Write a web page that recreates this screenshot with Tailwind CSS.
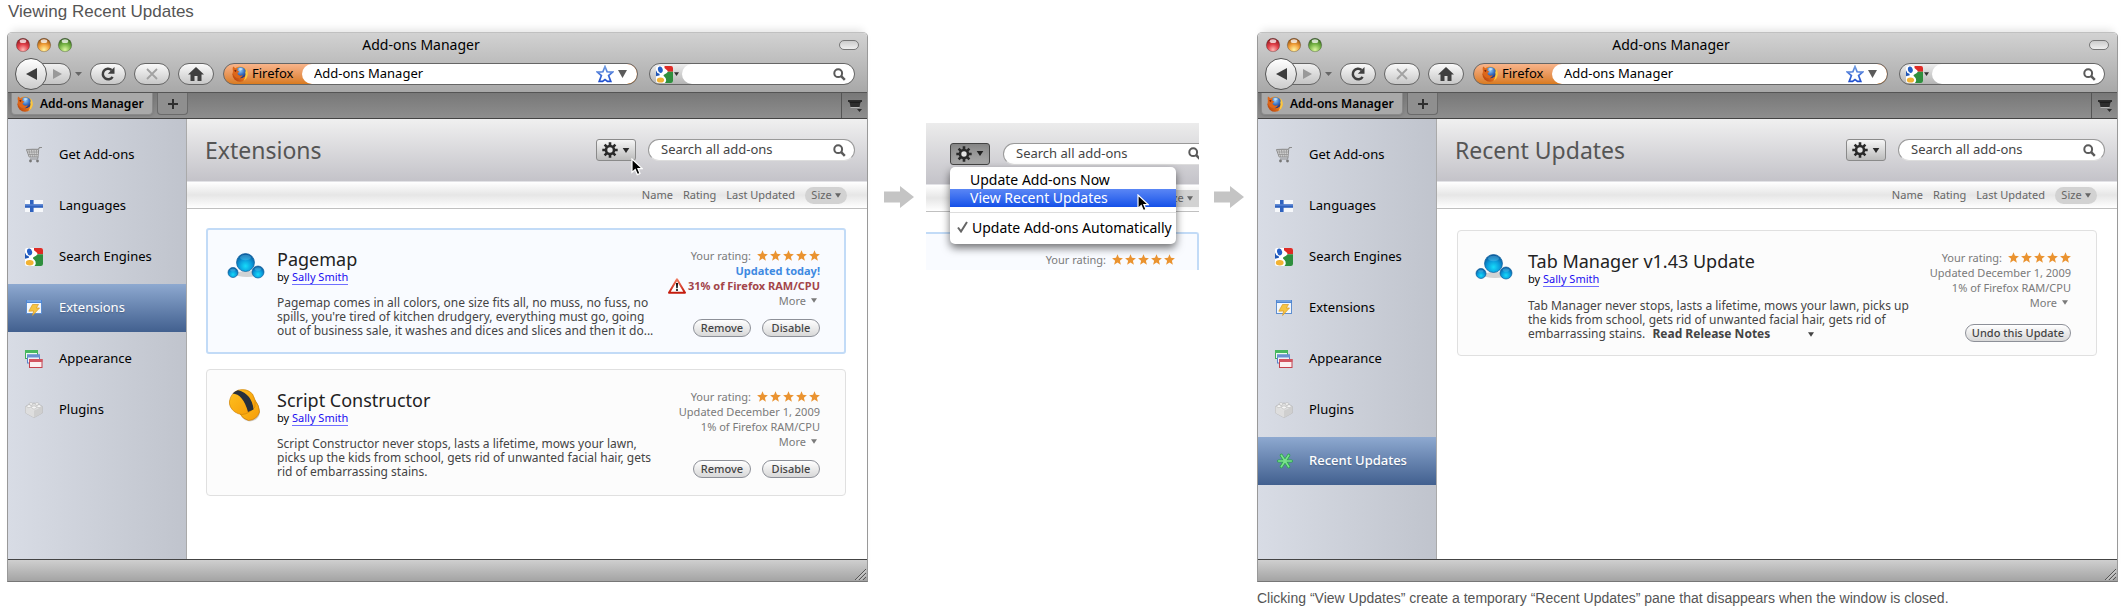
<!DOCTYPE html>
<html lang="en">
<head>
<meta charset="utf-8">
<title>Viewing Recent Updates</title>
<script src="https://cdn.jsdelivr.net/npm/@tailwindcss/browser@4"></script>
</head>
<body class="bg-white font-['Noto_Sans',sans-serif] text-black">

<!-- Shared icon symbols -->
<svg width="0" height="0" class="absolute" aria-hidden="true">
  <defs>
    <radialGradient id="gRed" cx=".5" cy=".85" r=".8"><stop offset="0" stop-color="#ffb9b4"/><stop offset=".5" stop-color="#e2414a"/><stop offset="1" stop-color="#8c1a1e"/></radialGradient>
    <radialGradient id="gYellow" cx=".5" cy=".85" r=".8"><stop offset="0" stop-color="#fff3a0"/><stop offset=".5" stop-color="#f3a23c"/><stop offset="1" stop-color="#96500f"/></radialGradient>
    <radialGradient id="gGreen" cx=".5" cy=".85" r=".8"><stop offset="0" stop-color="#dcf7a0"/><stop offset=".5" stop-color="#7cb94a"/><stop offset="1" stop-color="#33641c"/></radialGradient>
    <radialGradient id="gBall" cx=".5" cy=".7" r=".7"><stop offset="0" stop-color="#16dcfa"/><stop offset=".5" stop-color="#0b9cdc"/><stop offset="1" stop-color="#0a4f94"/></radialGradient>
    <linearGradient id="gHat" x1="0" y1="0" x2="1" y2="1"><stop offset="0" stop-color="#ffc21f"/><stop offset="1" stop-color="#f59a08"/></linearGradient>
    <linearGradient id="gWarn" x1="0" y1="0" x2="0" y2="1"><stop offset="0" stop-color="#f07a60"/><stop offset="1" stop-color="#c41a0c"/></linearGradient>
    <linearGradient id="gStar" x1="0" y1="0" x2="0" y2="1"><stop offset="0" stop-color="#6f9be0"/><stop offset="1" stop-color="#1f4fcf"/></linearGradient>
    <radialGradient id="gGlobe" cx=".45" cy=".3" r=".7"><stop offset="0" stop-color="#9fd4f7"/><stop offset=".5" stop-color="#3f78c8"/><stop offset="1" stop-color="#1c2f78"/></radialGradient>
    <linearGradient id="gFox" x1="1" y1="0" x2="0" y2="1"><stop offset="0" stop-color="#fbc23a"/><stop offset=".45" stop-color="#ee7d1b"/><stop offset="1" stop-color="#a8340c"/></linearGradient>
  </defs>
  <symbol id="firefox" viewBox="0 0 16 16">
    <circle cx="8" cy="8.200" r="7.600" fill="url(#gFox)"/>
    <circle cx="8.700" cy="6.600" r="5.600" fill="url(#gGlobe)"/>
    <path d="M6.500 2.600Q9 1.200 11 3 9.500 4.600 7.600 4z" fill="#cfe9f9" opacity=".8"/>
    <path d="M1 .6Q2.400 1.300 3.200 2.600 4.600 2.200 5.800 3 5.200 4 5.700 4.900 7 5 7.400 5.600 6.400 6.900 5.500 7.400 5.800 9 7.600 9.600 9.700 9.900 10.600 8.800 10.700 10.900 8.600 11.700 5 12.800 2.600 10.500.4 8 .9 4.600.4 2.600 1 .6z" fill="#dd671a"/>
    <path d="M2.200 4.200Q3.600 3.700 4.600 4.700L3.200 6z" fill="#6d1d09"/>
    <path d="M13.600 2.200Q16.200 5.200 15.700 8.800 15 13 11.500 14.900 14.200 10.500 13.200 6.500 14 4.500 13.600 2.200z" fill="#fbc944"/>
  </symbol>
  <symbol id="google" viewBox="0 0 18 18">
    <rect width="18" height="18" rx="2" fill="#fff"/>
    <path d="M9 0h7q2 0 2 2v4.200h-5.400l-.6-1.400L9 2.200z" fill="#de2b26"/>
    <path d="M12.600 6.200H18V16q0 2-2 2h-6.500q2-2 1-4.400-.8-1.800-2.300-2.900-.6-.7.200-1.400Q11.600 7.600 12.600 6.200z" fill="#2f8f3e"/>
    <path d="M0 4.500q.7 3.200 3.600 3.600L4 9.800 0 10.800z" fill="#1e55b5"/>
    <ellipse cx="4.600" cy="3.900" rx="2.500" ry="3.500" transform="rotate(-14 4.600 3.900)" fill="#2460c8"/>
    <ellipse cx="4.700" cy="14.800" rx="3.900" ry="2.700" fill="#f2b232"/>
  </symbol>
  <symbol id="cart" viewBox="0 0 16 16">
    <path d="M.5 2.500 12.500 2 13.200 1q.3-.6 1.100-.6H16" fill="none" stroke="#8e8e8e" stroke-width="1.200"/>
    <path d="M.5 2.700h12.200L12 10H3.200z" fill="#dcdcdc" stroke="#8e8e8e"/>
    <path d="M3 3l1.600 7M5.500 3l1 7M8 3l.3 7M10.500 3 10 10M1.300 5h11M2 7.500h10" stroke="#929292" stroke-width=".8"/>
    <path d="M12 10q.4 2-1 2H4" fill="none" stroke="#8e8e8e"/>
    <circle cx="4.500" cy="14" r="1.400" fill="#777"/><circle cx="11.500" cy="14" r="1.400" fill="#777"/>
  </symbol>
  <symbol id="flag" viewBox="0 0 18 12">
    <rect width="18" height="12" fill="#f6f8fb"/><path d="M0 4.200h18v3.600H0z" fill="#2f62bf"/><path d="M5 0h3.600v12H5z" fill="#2f62bf"/><path d="M0 5h18" stroke="#7ba0de" stroke-width=".8"/>
  </symbol>
  <symbol id="extension" viewBox="0 0 16 16">
    <rect x=".5" y=".5" width="15" height="13" fill="#f3f7fc" stroke="#5f8fd0"/><path d="M0 0h16v3H0z" fill="#4f86d2"/><path d="M1 1h14" stroke="#9cc0ee"/>
    <path d="M6.500 4.500h6L10.300 8h3.200L6.600 15.500 7.600 11 2.800 11.200z" fill="#f6c544" stroke="#d79a25" stroke-width=".7"/>
  </symbol>
  <symbol id="appearance" viewBox="0 0 18 18">
    <rect x=".5" y=".5" width="12" height="8" fill="#effaf0" stroke="#3fae58"/><path d="M0 0h13v3H0z" fill="#48b860"/>
    <rect x="2.500" y="5" width="12" height="8" fill="#eef3fb" stroke="#5b82c8"/><path d="M2 4.500h13v3H2z" fill="#6a90d2"/>
    <rect x="4.500" y="9.500" width="12.500" height="8" fill="#fbf0f0" stroke="#c4414c"/><path d="M4 9h13.500v3H4z" fill="#d25560"/>
  </symbol>
  <symbol id="plugin" viewBox="0 0 18 16">
    <path d="M.6 4.500 9 1l8.400 3.500V11L9 15.500.6 11z" fill="#e6e6e6" stroke="#b4b4b4" stroke-width=".8"/>
    <path d="M9 8.500 17.400 4.500V11L9 15.500z" fill="#cfcfcf"/><path d="M.6 4.500 9 8.500v7L.6 11z" fill="#dedede"/>
    <g fill="#f6f6f6" stroke="#b2b2b2" stroke-width=".6"><ellipse cx="6" cy="2" rx="2" ry="1.300"/><ellipse cx="12" cy="2" rx="2" ry="1.300"/><ellipse cx="4" cy="4.200" rx="2.200" ry="1.500"/><ellipse cx="9" cy="5.500" rx="2.400" ry="1.600"/><ellipse cx="14" cy="4.200" rx="2.200" ry="1.500"/></g>
  </symbol>
  <symbol id="asterisk" viewBox="0 0 16 16">
    <path d="M1.700 8h12.600M4.300 2.300 11.700 13.700M11.700 2.300 4.300 13.700" stroke="#2aa84a" stroke-width="3.200" stroke-linecap="round"/><path d="M1.700 8h12.600M4.300 2.300 11.700 13.700M11.700 2.300 4.300 13.700" stroke="#7be08e" stroke-width="1.600" stroke-linecap="round"/>
  </symbol>
  <symbol id="gear" viewBox="0 0 16 16">
    <path d="M8 .3v15.400M.3 8h15.400M2.600 2.600l10.800 10.800M13.400 2.600 2.600 13.400" stroke="#2a2a2a" stroke-width="2.600"/><circle cx="8" cy="8" r="4" fill="#e4e4e4" stroke="#2a2a2a" stroke-width="2.600"/>
  </symbol>
  <symbol id="search" viewBox="0 0 13 13">
    <circle cx="5.200" cy="5.200" r="3.900" fill="none" stroke="#5a5a5a" stroke-width="2"/><path d="M8.200 8.200 11.800 11.800" stroke="#5a5a5a" stroke-width="2.500"/>
  </symbol>
  <symbol id="star" viewBox="0 0 12 12"><path d="M6 .2 7.600 4.200 11.900 4.500 8.600 7.300 9.700 11.600 6 9.300 2.300 11.600 3.400 7.300.1 4.500 4.400 4.200z" fill="#ea9330"/></symbol>
  <symbol id="bookmark" viewBox="0 0 18 18"><path d="M9 1.500 11.100 6.800 16.700 7.100 12.600 10.600 14.800 16.400H11.500L9 14.600 6.500 16.400H3.200L5.400 10.600 1.300 7.100 6.900 6.800z" fill="#fff" stroke="url(#gStar)" stroke-width="1.700"/></symbol>
  <symbol id="balls" viewBox="0 0 38 28">
    <ellipse cx="20" cy="22" rx="12" ry="3" fill="#aaa" opacity=".5"/>
    <circle cx="6" cy="20.500" r="5" fill="url(#gBall)" stroke="#0a5f9c" stroke-width=".7"/><circle cx="31" cy="20" r="6" fill="url(#gBall)" stroke="#0a5f9c" stroke-width=".7"/>
    <circle cx="18.500" cy="10.500" r="9" fill="url(#gBall)" stroke="#0a5f9c" stroke-width=".7"/>
    <ellipse cx="18.500" cy="5.500" rx="5.500" ry="2.800" fill="#7fd6f6" opacity=".3"/><ellipse cx="5.800" cy="18" rx="2.800" ry="1.500" fill="#7fd6f6" opacity=".3"/><ellipse cx="31" cy="17" rx="3.400" ry="1.800" fill="#7fd6f6" opacity=".3"/>
  </symbol>
  <symbol id="hardhat" viewBox="0 0 34 34">
    <path d="M13 27Q24 24 27 11q5 6 5 13-2 8-10 8.500-6-.5-9-5.500z" fill="#888" opacity=".35"/>
    <path d="M12 25Q23 22 26.500 10.500q5 6 5 12.500Q29 31 20.500 31.500 15 30 12 25z" fill="url(#gHat)" stroke="#c97a06" stroke-width=".7"/>
    <path d="M1.500 12Q3 4 10 1.200 19-1 24.500 5q4 6 2.500 13Q21 25 14 25.500 6 24.500 2.500 18 1 15 1.500 12z" fill="url(#gHat)" stroke="#d08408" stroke-width=".7"/>
    <path d="M4.500 4.500Q15 5 20 23L25.500 20.500Q24 5 10 1.300 7 2 4.500 4.500z" fill="#27303c"/>
  </symbol>
  <symbol id="warning" viewBox="0 0 18 16"><path d="M9 1.300 17 14.700H1z" fill="#fff" stroke="url(#gWarn)" stroke-width="2" stroke-linejoin="round"/><path d="M7.900 5h2.200L9.700 10.300H8.300z" fill="#111"/><circle cx="9" cy="12" r="1.100" fill="#111"/></symbol>
  <symbol id="caret" viewBox="0 0 8 6"><path d="M0 0h8L4 6z" fill="currentColor"/></symbol>
  <symbol id="reload" viewBox="0 0 16 16"><path d="M12.600 10.800A5.300 5.300 0 1 1 11.600 4" fill="none" stroke="#3f3f3f" stroke-width="2.500"/><path d="M14.500 1v6.700H7.800z" fill="#3f3f3f"/></symbol>
  <symbol id="stop" viewBox="0 0 12 12"><path d="M1 1l10 10M11 1 1 11" stroke="#a2a2a2" stroke-width="1.800"/></symbol>
  <symbol id="home" viewBox="0 0 16 14"><path d="M8 0 16 7.500H13.500V14H9.500V9h-3v5h-4V7.500H0z" fill="#3f3f3f"/></symbol>
  <symbol id="tablist" viewBox="0 0 14 12"><path d="M0 0h14v2h-1.500L11.500 7h-9L1.500 2H0z" fill="#2d2d2d"/><path d="M1.500 2.300h11" stroke="#111" stroke-width=".7"/><path d="M9 9h5l-2.500 3z" fill="#2d2d2d"/><path d="M2.500 7.500h9" stroke="#c4c4c4" stroke-width=".8"/></symbol>
  <symbol id="cursor" viewBox="0 0 12 18"><path d="M1 1v13.500l3.200-2.900 2.100 5 2.700-1.100-2.100-4.900h4.300z" fill="#000" stroke="#fff" stroke-width="1.200"/></symbol>
  <symbol id="check" viewBox="0 0 11 12"><path d="M1 6.500 4 10.500 10 1" fill="none" stroke="#666" stroke-width="2"/></symbol>
  <symbol id="flow" viewBox="0 0 30 22"><path d="M0 5.500h16V0L30 11 16 22v-5.500H0z" fill="#c4c4c4"/></symbol>
  <symbol id="grip" viewBox="0 0 12 12"><path d="M1 12 12 1M5 12 12 5M9 12 12 9" stroke="#555"/><path d="M2 12.500 12.500 2M6 12.500 12.500 6" stroke="#e5e5e5" stroke-width=".7"/></symbol>
  <symbol id="lights" viewBox="0 0 58 16">
    <g stroke="#00000055" stroke-width=".7"><circle cx="8" cy="8" r="6.700" fill="url(#gRed)"/><circle cx="29" cy="8" r="6.700" fill="url(#gYellow)"/><circle cx="50" cy="8" r="6.700" fill="url(#gGreen)"/></g>
    <g fill="#fff" opacity=".75"><ellipse cx="8" cy="4.200" rx="3.300" ry="1.900"/><ellipse cx="29" cy="4.200" rx="3.300" ry="1.900"/><ellipse cx="50" cy="4.200" rx="3.300" ry="1.900"/></g>
  </symbol>
</svg>

<div class="pl-[7px] pr-1">
  <h1 class="h-8 pt-px pl-px font-['Liberation_Sans',Arial,sans-serif] text-[17px] leading-[22px] text-[#555]">Viewing Recent Updates</h1>

  <div class="grid grid-cols-[minmax(0,1fr)_389px_minmax(0,1fr)] items-start">

    <!-- Extensions window -->
    <section aria-label="Extensions window" class="rounded-t-[5px] border border-[#999] border-t-[#c0c0c0] border-b-[#777] bg-white shadow-[0_-7px_8px_-5px_rgba(0,0,0,0.12)]">
      <header class="rounded-t-[4px] border-b border-[#555] bg-linear-to-b from-[#d2d2d2] to-[#a8a8a8]">
        <div class="grid h-[23px] grid-cols-[1fr_auto_1fr] items-center pl-[7px] pr-2">
          <svg class="h-4 w-[58px]" role="img" aria-label="Window controls"><use href="#lights"/></svg>
          <span class="pr-8 text-[14px] leading-5">Add-ons Manager</span>
          <button type="button" aria-label="Toggle toolbar" class="h-[10px] w-5 justify-self-end rounded-full border border-[#777] bg-linear-to-b from-[#ccc] to-[#f0f0f0]"></button>
        </div>
        <div class="flex h-9 items-center pl-[7px] pr-3">
          <button type="button" aria-label="Back" class="z-10 flex size-8 shrink-0 items-center justify-center rounded-full border border-[#555] bg-linear-to-b from-white to-[#ccc]"><svg class="h-3 w-[11px]" viewBox="0 0 11 12"><path d="M11 0v12L0 6z" fill="#3c3c3c"/></svg></button>
          <button type="button" aria-label="Forward" class="-ml-2 flex h-[22px] w-8 shrink-0 items-center justify-end rounded-r-full border border-[#666] bg-linear-to-b from-[#f0f0f0] to-[#c4c4c4] pr-2"><svg class="h-[10px] w-[9px]" viewBox="0 0 9 10"><path d="M0 0v10l9-5z" fill="#999"/></svg></button>
          <button type="button" aria-label="History" class="ml-1 text-[#666]"><svg class="h-1 w-[7px]" viewBox="0 0 8 6" preserveAspectRatio="none"><path d="M0 0h8L4 6z" fill="currentColor"/></svg></button>
          <div class="ml-2 flex gap-2">
            <button type="button" aria-label="Reload" class="flex h-[22px] w-9 items-center justify-center rounded-full border border-[#666] bg-linear-to-b from-[#fafafa] to-[#c8c8c8]"><svg class="size-4"><use href="#reload"/></svg></button>
            <button type="button" aria-label="Stop" class="flex h-[22px] w-9 items-center justify-center rounded-full border border-[#666] bg-linear-to-b from-[#fafafa] to-[#c8c8c8]"><svg class="size-3"><use href="#stop"/></svg></button>
            <button type="button" aria-label="Home" class="flex h-[22px] w-9 items-center justify-center rounded-full border border-[#666] bg-linear-to-b from-[#fafafa] to-[#c8c8c8]"><svg class="h-[14px] w-4"><use href="#home"/></svg></button>
          </div>
          <div class="ml-[9px] flex h-[22px] min-w-0 flex-1 items-center overflow-hidden rounded-full border border-[#666] bg-linear-to-b from-[#f8b48a] to-[#d97b1c]">
            <span class="flex w-[78px] shrink-0 items-center gap-1 pl-2 text-[13px]"><svg class="size-4"><use href="#firefox"/></svg>Firefox</span>
            <div class="flex h-5 min-w-0 flex-1 items-center gap-1 rounded-full bg-white pl-3 pr-[10px]">
              <input type="text" aria-label="Address" value="Add-ons Manager" class="min-w-0 flex-1 bg-transparent text-[13px] outline-none">
              <button type="button" aria-label="Bookmark"><svg class="size-[18px]"><use href="#bookmark"/></svg></button>
              <button type="button" aria-label="Address history" class="text-[#5a5a5a]"><svg class="h-2 w-[9px]" viewBox="0 0 9 8"><path d="M0 0h9L4.500 8z" fill="currentColor"/></svg></button>
            </div>
          </div>
          <div class="ml-[11px] flex h-[22px] w-[206px] shrink-0 items-center overflow-hidden rounded-full border border-[#666] bg-linear-to-b from-[#eee] to-[#b4b4b4]">
            <button type="button" aria-label="Search provider" class="flex w-8 shrink-0 items-center gap-px pl-[6px] text-[#333]"><svg class="size-[17px]"><use href="#google"/></svg><svg class="h-1 w-[5px]"><use href="#caret"/></svg></button>
            <div class="flex h-5 min-w-0 flex-1 items-center rounded-full bg-white pl-3 pr-2"><input type="search" aria-label="Web search" class="min-w-0 flex-1 bg-transparent text-[13px] outline-none"><svg class="size-[13px]"><use href="#search"/></svg></div>
          </div>
        </div>
      </header>
      <nav aria-label="Tabs" class="flex h-[26px] items-start gap-1 border-b border-[#444] bg-linear-to-b from-[#787878] to-[#8e8e8e] pl-[3px]">
        <button type="button" class="flex h-[22px] w-[142px] items-center gap-[7px] rounded-b-[4px] border border-t-0 border-[#8a8a8a] bg-[#a9a9a9] pl-[5px] text-[12px] font-semibold shadow"><svg class="size-4 shrink-0"><use href="#firefox"/></svg><span class="whitespace-nowrap">Add-ons Manager</span></button>
        <button type="button" aria-label="New tab" class="flex h-[22px] w-[31px] items-center justify-center rounded-b-[4px] border border-t-0 border-[#6a6a6a] bg-[#8f8f8f]"><svg class="size-[10px]" viewBox="0 0 10 10"><path d="M5 0v10M0 5h10" stroke="#2e2e2e" stroke-width="2"/></svg></button>
        <button type="button" aria-label="List all tabs" class="ml-auto flex h-[25px] w-[26px] items-center justify-center border-l border-[#555]"><svg class="h-3 w-[14px]"><use href="#tablist"/></svg></button>
      </nav>
      <div class="flex min-h-[440px]">
        <aside class="w-[179px] shrink-0 border-r border-[#aaa] bg-linear-to-r from-[#d8dce5] to-[#c0c4cd] pt-3 text-[13px]">
          <ul class="flex flex-col gap-[3px]">
            <li><a href="#" class="flex h-12 items-center pl-[17px]"><span class="flex w-[34px]"><svg class="ml-px size-4"><use href="#cart"/></svg></span>Get Add-ons</a></li>
            <li><a href="#" class="flex h-12 items-center pl-[17px]"><span class="flex w-[34px]"><svg class="h-3 w-[18px]"><use href="#flag"/></svg></span>Languages</a></li>
            <li><a href="#" class="flex h-12 items-center pl-[17px]"><span class="flex w-[34px]"><svg class="size-[18px]"><use href="#google"/></svg></span>Search Engines</a></li>
            <li><a href="#" aria-current="page" class="flex h-12 items-center bg-linear-to-b from-[#8ea9d0] to-[#42608f] pl-[17px] text-white text-shadow-sm"><span class="flex w-[34px]"><svg class="ml-px size-4"><use href="#extension"/></svg></span>Extensions</a></li>
            <li><a href="#" class="flex h-12 items-center pl-[17px]"><span class="flex w-[34px]"><svg class="size-[18px]"><use href="#appearance"/></svg></span>Appearance</a></li>
            <li><a href="#" class="flex h-12 items-center pl-[17px]"><span class="flex w-[34px]"><svg class="h-4 w-[18px]"><use href="#plugin"/></svg></span>Plugins</a></li>
          </ul>
        </aside>
        <main class="min-w-0 flex-1">
          <div class="flex h-[62px] items-center bg-linear-to-b from-[#f0f0f0] to-[#c4c3c9] pl-[18px] pr-3">
            <h2 class="flex-1 text-[23px] text-[#555]">Extensions</h2>
            <div class="relative mr-3">
              <button type="button" aria-label="Tools" class="flex h-[22px] w-10 items-center justify-center gap-1 rounded-[3px] border border-[#8a8a8a] bg-linear-to-b from-[#f6f6f6] to-[#bcbcbc] text-[#2a2a2a]"><svg class="size-4"><use href="#gear"/></svg><svg class="h-[5px] w-2"><use href="#caret"/></svg></button>
              <svg class="absolute top-[19px] left-[35px] h-[18px] w-3"><use href="#cursor"/></svg>
            </div>
            <label class="flex h-[22px] w-[207px] items-center rounded-full border border-[#999] border-b-[#ddd] bg-white pl-3 pr-2"><input type="search" aria-label="Search all add-ons" placeholder="Search all add-ons" class="min-w-0 flex-1 bg-transparent text-[13px] outline-none placeholder:text-[#444]"><svg class="size-[13px]"><use href="#search"/></svg></label>
          </div>
          <div class="flex h-[28px] items-center justify-end border-t border-b border-t-[#e2e2e6] border-b-[#c0c0c0] bg-linear-to-b from-white via-[#e6e6e6] to-white pr-5 text-[11px] text-[#666]">
            <button type="button" class="mr-[10px]">Name</button><button type="button" class="mr-[10px]">Rating</button><button type="button" class="mr-[10px]">Last Updated</button>
            <button type="button" class="flex h-[17px] w-[42px] items-center justify-center gap-[3px] rounded-full bg-[#d2d2d2]">Size<svg class="h-[5px] w-[6px]"><use href="#caret"/></svg></button>
          </div>
          <div class="flex flex-col gap-[15px] pt-[19px] pr-[21px] pl-[19px]">
            <article class="flex rounded-[3px] border-2 border-[#c2dbf7] bg-[#f9fbff] pt-[18px] pr-6 pb-[14px] pl-[19px]">
              <div class="w-[50px] shrink-0"><svg class="mt-1 h-7 w-[38px]"><use href="#balls"/></svg></div>
              <div class="min-w-0 flex-1 whitespace-nowrap">
                <h3 class="text-[18px] leading-[22px] text-[#222]">Pagemap</h3>
                <p class="text-[11px] leading-[14px]">by <a href="#" class="border-b border-[#7070ff] text-[#1a0cf0]">Sally Smith</a></p>
                <p class="mt-3 text-[12px] leading-[14px] text-[#444]">Pagemap comes in all colors, one size fits all, no muss, no fuss, no<br>spills, you're tired of kitchen drudgery, everything must go, going<br>out of business sale, it washes and dices and slices and then it do...</p>
              </div>
              <div class="flex shrink-0 flex-col items-end text-[11px] leading-[15px] whitespace-nowrap text-[#7a7a7a]">
                <p class="flex items-center gap-[6px]">Your rating:<span role="img" aria-label="5 stars" class="flex gap-[2px]"><svg class="size-[11px]"><use href="#star"/></svg><svg class="size-[11px]"><use href="#star"/></svg><svg class="size-[11px]"><use href="#star"/></svg><svg class="size-[11px]"><use href="#star"/></svg><svg class="size-[11px]"><use href="#star"/></svg></span></p>
                <p class="font-bold text-[#3f8ae2]">Updated today!</p>
                <p class="flex h-[15px] items-center gap-[2px] font-bold text-[#a3454a]"><svg class="h-4 w-[18px]"><use href="#warning"/></svg>31% of Firefox RAM/CPU</p>
                <button type="button" class="flex items-center gap-[5px] pr-[3px]">More<svg class="h-[5px] w-[6px]"><use href="#caret"/></svg></button>
                <div class="mt-[11px] flex gap-[11px] text-[#444]"><button type="button" class="h-[18px] w-[58px] rounded-full border border-[#8d9098] bg-linear-to-b from-white to-[#d8d8d8] leading-4 font-medium">Remove</button><button type="button" class="h-[18px] w-[58px] rounded-full border border-[#8d9098] bg-linear-to-b from-white to-[#d8d8d8] leading-4 font-medium">Disable</button></div>
              </div>
            </article>
            <article class="flex rounded-[4px] border border-[#e0e0e0] bg-[#fcfcfc] pt-[19px] pr-[25px] pb-4 pl-5">
              <div class="w-[50px] shrink-0"><svg class="ml-px size-[34px]"><use href="#hardhat"/></svg></div>
              <div class="min-w-0 flex-1 whitespace-nowrap">
                <h3 class="text-[18px] leading-[22px] text-[#222]">Script Constructor</h3>
                <p class="text-[11px] leading-[14px]">by <a href="#" class="border-b border-[#7070ff] text-[#1a0cf0]">Sally Smith</a></p>
                <p class="mt-3 text-[12px] leading-[14px] text-[#444]">Script Constructor never stops, lasts a lifetime, mows your lawn,<br>picks up the kids from school, gets rid of unwanted facial hair, gets<br>rid of embarrassing stains.</p>
              </div>
              <div class="flex shrink-0 flex-col items-end text-[11px] leading-[15px] whitespace-nowrap text-[#7a7a7a]">
                <p class="flex items-center gap-[6px]">Your rating:<span role="img" aria-label="5 stars" class="flex gap-[2px]"><svg class="size-[11px]"><use href="#star"/></svg><svg class="size-[11px]"><use href="#star"/></svg><svg class="size-[11px]"><use href="#star"/></svg><svg class="size-[11px]"><use href="#star"/></svg><svg class="size-[11px]"><use href="#star"/></svg></span></p>
                <p>Updated December 1, 2009</p>
                <p>1% of Firefox RAM/CPU</p>
                <button type="button" class="flex items-center gap-[5px] pr-[3px]">More<svg class="h-[5px] w-[6px]"><use href="#caret"/></svg></button>
                <div class="mt-[11px] flex gap-[11px] text-[#444]"><button type="button" class="h-[18px] w-[58px] rounded-full border border-[#8d9098] bg-linear-to-b from-white to-[#d8d8d8] leading-4 font-medium">Remove</button><button type="button" class="h-[18px] w-[58px] rounded-full border border-[#8d9098] bg-linear-to-b from-white to-[#d8d8d8] leading-4 font-medium">Disable</button></div>
              </div>
            </article>
          </div>
        </main>
      </div>
      <footer class="flex h-[22px] items-end justify-end border-t border-[#444] bg-linear-to-b from-[#cfcfcf] to-[#a4a4a4] p-px"><svg class="size-3"><use href="#grip"/></svg></footer>
    </section>

    <!-- Tools menu step -->
    <div class="mt-[91px] flex items-center pr-[13px] pl-4">
      <svg class="mr-3 h-[22px] w-[30px] shrink-0" role="img" aria-label="then"><use href="#flow"/></svg>
      <section aria-label="Tools menu" class="relative mr-[15px] h-[147px] min-w-0 flex-1 overflow-hidden">
        <div class="flex h-[61px] items-center bg-linear-to-b from-[#ececec] to-[#c4c3c9] pl-6">
          <button type="button" aria-label="Tools" aria-expanded="true" class="mr-[13px] flex h-[22px] w-10 shrink-0 items-center justify-center gap-1 rounded-[3px] border border-[#444] bg-linear-to-b from-[#8a8a8a] to-[#a8a8a8] text-[#222] shadow-inner"><svg class="size-4"><use href="#gear"/></svg><svg class="h-[5px] w-2"><use href="#caret"/></svg></button>
          <label class="flex h-[22px] w-[207px] shrink-0 items-center rounded-full border border-[#999] border-b-[#ddd] bg-white pl-3 pr-2"><input type="search" aria-label="Search all add-ons" placeholder="Search all add-ons" class="min-w-0 flex-1 bg-transparent text-[13px] outline-none placeholder:text-[#444]"><svg class="size-[13px]"><use href="#search"/></svg></label>
        </div>
        <div class="flex h-[28px] items-center justify-end border-t border-b border-t-[#e2e2e6] border-b-[#c0c0c0] bg-linear-to-b from-white via-[#e6e6e6] to-white text-[11px] text-[#666]">
          <button type="button" class="flex h-[17px] w-[42px] items-center justify-center gap-[3px] rounded-l-full bg-[#d2d2d2]">Size<svg class="h-[5px] w-[6px]"><use href="#caret"/></svg></button>
        </div>
        <div class="mt-5 flex h-10 justify-end rounded-tr-[3px] border-t-2 border-r-2 border-[#c2dbf7] bg-[#f9fbff] pt-[18px] pr-[22px] text-[11px] leading-[15px] text-[#7a7a7a]">
          <p class="flex h-[15px] items-center gap-[6px]">Your rating:<span role="img" aria-label="5 stars" class="flex gap-[2px]"><svg class="size-[11px]"><use href="#star"/></svg><svg class="size-[11px]"><use href="#star"/></svg><svg class="size-[11px]"><use href="#star"/></svg><svg class="size-[11px]"><use href="#star"/></svg><svg class="size-[11px]"><use href="#star"/></svg></span></p>
        </div>
        <div role="menu" class="absolute top-11 left-6 w-[226px] rounded-[5px] bg-white pt-1 pb-[6px] text-[14px] shadow-[0_4px_9px_rgba(0,0,0,0.55)]">
          <button type="button" role="menuitem" class="block h-[18px] w-full pl-5 text-left leading-[18px]">Update Add-ons Now</button>
          <button type="button" role="menuitem" class="block h-[18px] w-full bg-linear-to-b from-[#5a86f5] to-[#1450e8] pl-5 text-left leading-[18px] text-white">View Recent Updates</button>
          <hr class="mt-[5px] mb-[3px] border-[#ddd]">
          <button type="button" role="menuitemcheckbox" aria-checked="true" class="flex h-[22px] w-full items-center gap-1 pl-[7px]"><svg class="h-3 w-[11px]"><use href="#check"/></svg><span class="whitespace-nowrap">Update Add-ons Automatically</span></button>
          <svg class="absolute top-[27px] left-[187px] h-[18px] w-3"><use href="#cursor"/></svg>
        </div>
      </section>
      <svg class="h-[22px] w-[30px] shrink-0" role="img" aria-label="then"><use href="#flow"/></svg>
    </div>

    <!-- Recent Updates window -->
    <figure>
      <section aria-label="Recent Updates window" class="rounded-t-[5px] border border-[#999] border-t-[#c0c0c0] border-b-[#777] bg-white shadow-[0_-7px_8px_-5px_rgba(0,0,0,0.12)]">
        <header class="rounded-t-[4px] border-b border-[#555] bg-linear-to-b from-[#d2d2d2] to-[#a8a8a8]">
          <div class="grid h-[23px] grid-cols-[1fr_auto_1fr] items-center pl-[7px] pr-2">
            <svg class="h-4 w-[58px]" role="img" aria-label="Window controls"><use href="#lights"/></svg>
            <span class="pr-8 text-[14px] leading-5">Add-ons Manager</span>
            <button type="button" aria-label="Toggle toolbar" class="h-[10px] w-5 justify-self-end rounded-full border border-[#777] bg-linear-to-b from-[#ccc] to-[#f0f0f0]"></button>
          </div>
          <div class="flex h-9 items-center pl-[7px] pr-3">
            <button type="button" aria-label="Back" class="z-10 flex size-8 shrink-0 items-center justify-center rounded-full border border-[#555] bg-linear-to-b from-white to-[#ccc]"><svg class="h-3 w-[11px]" viewBox="0 0 11 12"><path d="M11 0v12L0 6z" fill="#3c3c3c"/></svg></button>
            <button type="button" aria-label="Forward" class="-ml-2 flex h-[22px] w-8 shrink-0 items-center justify-end rounded-r-full border border-[#666] bg-linear-to-b from-[#f0f0f0] to-[#c4c4c4] pr-2"><svg class="h-[10px] w-[9px]" viewBox="0 0 9 10"><path d="M0 0v10l9-5z" fill="#999"/></svg></button>
            <button type="button" aria-label="History" class="ml-1 text-[#666]"><svg class="h-1 w-[7px]" viewBox="0 0 8 6" preserveAspectRatio="none"><path d="M0 0h8L4 6z" fill="currentColor"/></svg></button>
            <div class="ml-2 flex gap-2">
              <button type="button" aria-label="Reload" class="flex h-[22px] w-9 items-center justify-center rounded-full border border-[#666] bg-linear-to-b from-[#fafafa] to-[#c8c8c8]"><svg class="size-4"><use href="#reload"/></svg></button>
              <button type="button" aria-label="Stop" class="flex h-[22px] w-9 items-center justify-center rounded-full border border-[#666] bg-linear-to-b from-[#fafafa] to-[#c8c8c8]"><svg class="size-3"><use href="#stop"/></svg></button>
              <button type="button" aria-label="Home" class="flex h-[22px] w-9 items-center justify-center rounded-full border border-[#666] bg-linear-to-b from-[#fafafa] to-[#c8c8c8]"><svg class="h-[14px] w-4"><use href="#home"/></svg></button>
            </div>
            <div class="ml-[9px] flex h-[22px] min-w-0 flex-1 items-center overflow-hidden rounded-full border border-[#666] bg-linear-to-b from-[#f8b48a] to-[#d97b1c]">
              <span class="flex w-[78px] shrink-0 items-center gap-1 pl-2 text-[13px]"><svg class="size-4"><use href="#firefox"/></svg>Firefox</span>
              <div class="flex h-5 min-w-0 flex-1 items-center gap-1 rounded-full bg-white pl-3 pr-[10px]">
                <input type="text" aria-label="Address" value="Add-ons Manager" class="min-w-0 flex-1 bg-transparent text-[13px] outline-none">
                <button type="button" aria-label="Bookmark"><svg class="size-[18px]"><use href="#bookmark"/></svg></button>
                <button type="button" aria-label="Address history" class="text-[#5a5a5a]"><svg class="h-2 w-[9px]" viewBox="0 0 9 8"><path d="M0 0h9L4.500 8z" fill="currentColor"/></svg></button>
              </div>
            </div>
            <div class="ml-[11px] flex h-[22px] w-[206px] shrink-0 items-center overflow-hidden rounded-full border border-[#666] bg-linear-to-b from-[#eee] to-[#b4b4b4]">
              <button type="button" aria-label="Search provider" class="flex w-8 shrink-0 items-center gap-px pl-[6px] text-[#333]"><svg class="size-[17px]"><use href="#google"/></svg><svg class="h-1 w-[5px]"><use href="#caret"/></svg></button>
              <div class="flex h-5 min-w-0 flex-1 items-center rounded-full bg-white pl-3 pr-2"><input type="search" aria-label="Web search" class="min-w-0 flex-1 bg-transparent text-[13px] outline-none"><svg class="size-[13px]"><use href="#search"/></svg></div>
            </div>
          </div>
        </header>
        <nav aria-label="Tabs" class="flex h-[26px] items-start gap-1 border-b border-[#444] bg-linear-to-b from-[#787878] to-[#8e8e8e] pl-[3px]">
          <button type="button" class="flex h-[22px] w-[142px] items-center gap-[7px] rounded-b-[4px] border border-t-0 border-[#8a8a8a] bg-[#a9a9a9] pl-[5px] text-[12px] font-semibold shadow"><svg class="size-4 shrink-0"><use href="#firefox"/></svg><span class="whitespace-nowrap">Add-ons Manager</span></button>
          <button type="button" aria-label="New tab" class="flex h-[22px] w-[31px] items-center justify-center rounded-b-[4px] border border-t-0 border-[#6a6a6a] bg-[#8f8f8f]"><svg class="size-[10px]" viewBox="0 0 10 10"><path d="M5 0v10M0 5h10" stroke="#2e2e2e" stroke-width="2"/></svg></button>
          <button type="button" aria-label="List all tabs" class="ml-auto flex h-[25px] w-[26px] items-center justify-center border-l border-[#555]"><svg class="h-3 w-[14px]"><use href="#tablist"/></svg></button>
        </nav>
        <div class="flex min-h-[440px]">
          <aside class="w-[179px] shrink-0 border-r border-[#aaa] bg-linear-to-r from-[#d8dce5] to-[#c0c4cd] pt-3 text-[13px]">
            <ul class="flex flex-col gap-[3px]">
              <li><a href="#" class="flex h-12 items-center pl-[17px]"><span class="flex w-[34px]"><svg class="ml-px size-4"><use href="#cart"/></svg></span>Get Add-ons</a></li>
              <li><a href="#" class="flex h-12 items-center pl-[17px]"><span class="flex w-[34px]"><svg class="h-3 w-[18px]"><use href="#flag"/></svg></span>Languages</a></li>
              <li><a href="#" class="flex h-12 items-center pl-[17px]"><span class="flex w-[34px]"><svg class="size-[18px]"><use href="#google"/></svg></span>Search Engines</a></li>
              <li><a href="#" class="flex h-12 items-center pl-[17px]"><span class="flex w-[34px]"><svg class="ml-px size-4"><use href="#extension"/></svg></span>Extensions</a></li>
              <li><a href="#" class="flex h-12 items-center pl-[17px]"><span class="flex w-[34px]"><svg class="size-[18px]"><use href="#appearance"/></svg></span>Appearance</a></li>
              <li><a href="#" class="flex h-12 items-center pl-[17px]"><span class="flex w-[34px]"><svg class="h-4 w-[18px]"><use href="#plugin"/></svg></span>Plugins</a></li>
              <li><a href="#" aria-current="page" class="flex h-12 items-center bg-linear-to-b from-[#8ea9d0] to-[#42608f] pl-[17px] font-medium text-white text-shadow-sm"><span class="flex w-[34px]"><svg class="ml-[2px] size-4"><use href="#asterisk"/></svg></span>Recent Updates</a></li>
            </ul>
          </aside>
          <main class="min-w-0 flex-1">
            <div class="flex h-[62px] items-center bg-linear-to-b from-[#f0f0f0] to-[#c4c3c9] pl-[18px] pr-3">
              <h2 class="flex-1 text-[23px] text-[#555]">Recent Updates</h2>
              <button type="button" aria-label="Tools" class="mr-3 flex h-[22px] w-10 items-center justify-center gap-1 rounded-[3px] border border-[#8a8a8a] bg-linear-to-b from-[#f6f6f6] to-[#bcbcbc] text-[#2a2a2a]"><svg class="size-4"><use href="#gear"/></svg><svg class="h-[5px] w-2"><use href="#caret"/></svg></button>
              <label class="flex h-[22px] w-[207px] items-center rounded-full border border-[#999] border-b-[#ddd] bg-white pl-3 pr-2"><input type="search" aria-label="Search all add-ons" placeholder="Search all add-ons" class="min-w-0 flex-1 bg-transparent text-[13px] outline-none placeholder:text-[#444]"><svg class="size-[13px]"><use href="#search"/></svg></label>
            </div>
            <div class="flex h-[28px] items-center justify-end border-t border-b border-t-[#e2e2e6] border-b-[#c0c0c0] bg-linear-to-b from-white via-[#e6e6e6] to-white pr-5 text-[11px] text-[#666]">
              <button type="button" class="mr-[10px]">Name</button><button type="button" class="mr-[10px]">Rating</button><button type="button" class="mr-[10px]">Last Updated</button>
              <button type="button" class="flex h-[17px] w-[42px] items-center justify-center gap-[3px] rounded-full bg-[#d2d2d2]">Size<svg class="h-[5px] w-[6px]"><use href="#caret"/></svg></button>
            </div>
            <div class="pt-[21px] pr-5 pl-5">
              <article class="flex rounded-[4px] border border-[#e0e0e0] bg-[#fcfcfc] pt-[19px] pr-[25px] pb-[13px] pl-[17px]">
                <div class="w-[53px] shrink-0"><svg class="mt-[3px] h-7 w-[38px]"><use href="#balls"/></svg></div>
                <div class="min-w-0 flex-1 whitespace-nowrap">
                  <h3 class="text-[18px] leading-[22px] text-[#222]">Tab Manager v1.43 Update</h3>
                  <p class="text-[11px] leading-[14px]">by <a href="#" class="border-b border-[#7070ff] text-[#1a0cf0]">Sally Smith</a></p>
                  <p class="mt-[13px] text-[12px] leading-[14px] text-[#444]">Tab Manager never stops, lasts a lifetime, mows your lawn, picks up<br>the kids from school, gets rid of unwanted facial hair, gets rid of<br>embarrassing stains. <a href="#" class="ml-1 font-bold">Read Release Notes<svg class="ml-[38px] inline h-[5px] w-[6px] align-middle"><use href="#caret"/></svg></a></p>
                </div>
                <div class="flex shrink-0 flex-col items-end text-[11px] leading-[15px] whitespace-nowrap text-[#7a7a7a]">
                  <p class="flex items-center gap-[6px]">Your rating:<span role="img" aria-label="5 stars" class="flex gap-[2px]"><svg class="size-[11px]"><use href="#star"/></svg><svg class="size-[11px]"><use href="#star"/></svg><svg class="size-[11px]"><use href="#star"/></svg><svg class="size-[11px]"><use href="#star"/></svg><svg class="size-[11px]"><use href="#star"/></svg></span></p>
                  <p>Updated December 1, 2009</p>
                  <p>1% of Firefox RAM/CPU</p>
                  <button type="button" class="flex items-center gap-[5px] pr-[3px]">More<svg class="h-[5px] w-[6px]"><use href="#caret"/></svg></button>
                  <button type="button" class="mt-[14px] h-[18px] w-[106px] rounded-full border border-[#8d9098] bg-linear-to-b from-white to-[#d8d8d8] leading-4 font-medium text-[#444]">Undo this Update</button>
                </div>
              </article>
            </div>
          </main>
        </div>
        <footer class="flex h-[22px] items-end justify-end border-t border-[#444] bg-linear-to-b from-[#cfcfcf] to-[#a4a4a4] p-px"><svg class="size-3"><use href="#grip"/></svg></footer>
      </section>
      <figcaption class="pt-[6px] font-['Liberation_Sans',Arial,sans-serif] text-[14px] leading-5 text-[#555]">Clicking “View Updates” create a temporary “Recent Updates” pane that disappears when the window is closed.</figcaption>
    </figure>
  </div>
</div>
</body>
</html>
